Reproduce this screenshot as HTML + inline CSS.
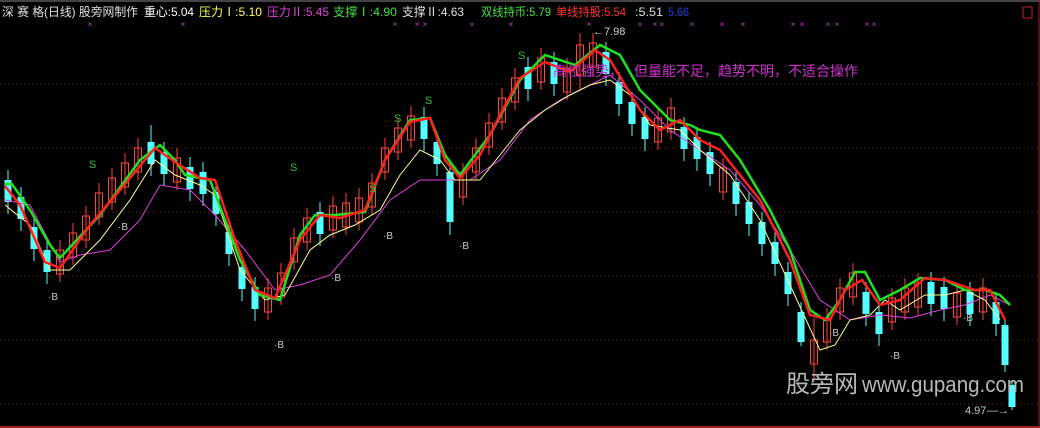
<!DOCTYPE html>
<html><head><meta charset="utf-8"><style>
html,body{margin:0;padding:0;background:#000;width:1040px;height:428px;overflow:hidden}
svg{display:block}
text{font-family:"Liberation Sans","Noto Sans CJK SC",sans-serif}
</style></head><body>
<svg width="1040" height="428" viewBox="0 0 1040 428" xmlns="http://www.w3.org/2000/svg">
<rect width="1040" height="428" fill="#000"/>
<line x1="0" y1="1" x2="1040" y2="1" stroke="#888" stroke-width="1"/>
<line x1="0" y1="427" x2="1040" y2="427" stroke="#a02020" stroke-width="2"/>
<line x1="1039" y1="0" x2="1039" y2="428" stroke="#a02020" stroke-width="1"/>
<g stroke="#8a1e1e" stroke-width="1" stroke-dasharray="1,3">
<line x1="0" y1="84" x2="1040" y2="84"/><line x1="0" y1="148" x2="1040" y2="148"/>
<line x1="0" y1="212" x2="1040" y2="212"/><line x1="0" y1="276" x2="1040" y2="276"/>
<line x1="0" y1="340" x2="1040" y2="340"/><line x1="0" y1="404" x2="1040" y2="404"/>
</g>
<rect x="1023" y="7" width="9" height="11" fill="none" stroke="#c02020"/>
<g font-size="12" lengthAdjust="spacingAndGlyphs">
<text x="2" y="16" fill="#e0e0e0" textLength="136" lengthAdjust="spacingAndGlyphs">深 赛 格(日线) 股旁网制作</text>
<text x="144" y="16" fill="#ffffff" textLength="50" lengthAdjust="spacingAndGlyphs">重心:5.04</text>
<text x="199" y="16" fill="#ffff60" textLength="63" lengthAdjust="spacingAndGlyphs">压力Ⅰ:5.10</text>
<text x="267" y="16" fill="#e040e0" textLength="62" lengthAdjust="spacingAndGlyphs">压力Ⅱ:5.45</text>
<text x="333" y="16" fill="#40e040" textLength="64" lengthAdjust="spacingAndGlyphs">支撑Ⅰ:4.90</text>
<text x="402" y="16" fill="#e0e0e0" textLength="62" lengthAdjust="spacingAndGlyphs">支撑Ⅱ:4.63</text>
<text x="481" y="16" fill="#40e040" textLength="70" lengthAdjust="spacingAndGlyphs">双线持币:5.79</text>
<text x="556" y="16" fill="#ff3030" textLength="70" lengthAdjust="spacingAndGlyphs">单线持股:5.54</text>
<text x="635" y="16" fill="#e0e0e0" textLength="28" lengthAdjust="spacingAndGlyphs">:5.51</text>
<text x="668" y="16" fill="#2040e0" textLength="21" lengthAdjust="spacingAndGlyphs">5.66</text>
</g>
<g font-size="8" fill="#d040d0" text-anchor="middle">
<text x="90" y="27">×</text><text x="183" y="27">×</text><text x="395" y="27">×</text><text x="417" y="27">×</text><text x="425" y="27">×</text>
<text x="472" y="27">×</text><text x="511" y="27">×</text><text x="589" y="27">×</text><text x="640" y="27">×</text><text x="655" y="27">×</text><text x="662" y="27">×</text>
<text x="692" y="27">×</text><text x="722" y="27">×</text><text x="743" y="27">×</text><text x="793" y="27">×</text><text x="802" y="27">×</text>
<text x="828" y="27">×</text><text x="837" y="27">×</text><text x="867" y="27">×</text><text x="874" y="27">×</text>
</g>
<!-- wicks -->
<path stroke="#ff4040" stroke-width="1" fill="none" d="M60 240V282M73 223V265M86 206V248M99 183V225M112 168V210M125 153V195M138 138V180M177 148V190M268 278V320M281 263V305M294 228V270M307 208V250M333 196V238M346 193V235M359 188V230M372 173V215M385 138V180M398 118V160M411 106V148M463 163V205M476 138V180M489 113V155M502 88V130M515 68V110M541 48V90M567 58V100M580 33V90M593 33V75M658 108V150M671 98V140M723 158V200M814 318V380M827 308V350M840 278V320M853 263V305M892 288V330M905 278V320M918 273V315M957 283V325M983 278V320"/>
<path stroke="#54ffff" stroke-width="1" fill="none" d="M8 170V214M21 187V231M34 217V261M47 240V284M151 125V176M164 142V186M190 157V201M203 162V206M216 182V226M229 222V266M242 257V301M255 277V321M320 202V246M424 107V151M437 132V176M450 162V235M528 57V101M554 52V96M606 42V86M619 72V116M632 92V136M645 107V151M684 117V161M697 127V171M710 142V186M736 172V216M749 192V236M762 212V256M775 232V276M788 262V306M801 302V346M866 282V326M879 302V346M931 272V316M944 277V321M970 282V326M996 292V336M1005 320V372M1012 380V410"/>
<g fill="#54ffff">
<rect x="4.5" y="180" width="7" height="22"/><rect x="17.5" y="197" width="7" height="22"/><rect x="30.5" y="227" width="7" height="22"/><rect x="43.5" y="250" width="7" height="22"/>
<rect x="147.5" y="142" width="7" height="22"/><rect x="160.5" y="152" width="7" height="22"/><rect x="186.5" y="167" width="7" height="22"/><rect x="199.5" y="172" width="7" height="22"/>
<rect x="212.5" y="192" width="7" height="22"/><rect x="225.5" y="232" width="7" height="22"/><rect x="238.5" y="267" width="7" height="22"/><rect x="251.5" y="287" width="7" height="22"/>
<rect x="316.5" y="212" width="7" height="22"/><rect x="420.5" y="117" width="7" height="22"/><rect x="433.5" y="142" width="7" height="22"/><rect x="446.5" y="172" width="7" height="50"/>
<rect x="524.5" y="67" width="7" height="22"/><rect x="550.5" y="62" width="7" height="22"/><rect x="602.5" y="52" width="7" height="22"/><rect x="615.5" y="82" width="7" height="22"/>
<rect x="628.5" y="102" width="7" height="22"/><rect x="641.5" y="117" width="7" height="22"/><rect x="680.5" y="127" width="7" height="22"/><rect x="693.5" y="137" width="7" height="22"/>
<rect x="706.5" y="152" width="7" height="22"/><rect x="732.5" y="182" width="7" height="22"/><rect x="745.5" y="202" width="7" height="22"/><rect x="758.5" y="222" width="7" height="22"/>
<rect x="771.5" y="242" width="7" height="22"/><rect x="784.5" y="272" width="7" height="22"/><rect x="797.5" y="312" width="7" height="30"/><rect x="862.5" y="292" width="7" height="22"/>
<rect x="875.5" y="312" width="7" height="22"/><rect x="927.5" y="282" width="7" height="22"/><rect x="940.5" y="287" width="7" height="22"/><rect x="966.5" y="292" width="7" height="22"/>
<rect x="992.5" y="302" width="7" height="22"/><rect x="1001.5" y="325" width="7" height="40"/><rect x="1008.5" y="385" width="7" height="22"/>
</g>
<g fill="none" stroke="#ff4a3a" stroke-width="1">
<rect x="56.5" y="250" width="7" height="24"/><rect x="69.5" y="233" width="7" height="24"/><rect x="82.5" y="216" width="7" height="24"/><rect x="95.5" y="193" width="7" height="24"/>
<rect x="108.5" y="178" width="7" height="24"/><rect x="121.5" y="163" width="7" height="24"/><rect x="134.5" y="148" width="7" height="24"/><rect x="173.5" y="158" width="7" height="24"/>
<rect x="264.5" y="288" width="7" height="24"/><rect x="277.5" y="273" width="7" height="24"/><rect x="290.5" y="238" width="7" height="24"/><rect x="303.5" y="218" width="7" height="24"/>
<rect x="329.5" y="206" width="7" height="24"/><rect x="342.5" y="203" width="7" height="24"/><rect x="355.5" y="198" width="7" height="24"/><rect x="368.5" y="183" width="7" height="24"/>
<rect x="381.5" y="148" width="7" height="24"/><rect x="394.5" y="128" width="7" height="24"/><rect x="407.5" y="116" width="7" height="24"/><rect x="459.5" y="173" width="7" height="24"/>
<rect x="472.5" y="148" width="7" height="24"/><rect x="485.5" y="123" width="7" height="24"/><rect x="498.5" y="98" width="7" height="24"/><rect x="511.5" y="78" width="7" height="24"/>
<rect x="537.5" y="58" width="7" height="24"/><rect x="563.5" y="68" width="7" height="24"/><rect x="576.5" y="45" width="7" height="30"/><rect x="589.5" y="43" width="7" height="24"/>
<rect x="654.5" y="118" width="7" height="24"/><rect x="667.5" y="108" width="7" height="24"/><rect x="719.5" y="168" width="7" height="24"/><rect x="810.5" y="340" width="7" height="24"/>
<rect x="823.5" y="318" width="7" height="24"/><rect x="836.5" y="288" width="7" height="24"/><rect x="849.5" y="273" width="7" height="24"/><rect x="888.5" y="298" width="7" height="24"/>
<rect x="901.5" y="288" width="7" height="24"/><rect x="914.5" y="283" width="7" height="24"/><rect x="953.5" y="293" width="7" height="24"/><rect x="979.5" y="288" width="7" height="24"/>
</g>
<polyline fill="none" stroke="#e040e0" stroke-width="1" points="5,200 30,205 60,262 80,255 110,250 140,220 160,185 190,190 215,215 245,250 275,290 300,285 330,275 360,240 390,200 420,180 450,180 470,180 500,160 530,120 560,100 590,85 610,75 640,100 670,130 700,150 730,170 760,205 790,250 820,300 850,320 880,315 910,318 940,310 965,305 990,295 1010,305"/>
<polyline fill="none" stroke="#ffff90" stroke-width="1" points="5,205 30,225 50,270 70,270 100,240 130,200 155,160 175,175 200,185 215,195 240,270 265,300 285,295 310,250 330,235 355,225 380,210 400,175 420,150 440,160 455,180 480,180 500,155 520,130 545,110 570,95 590,85 610,80 630,95 650,125 680,130 700,150 730,175 760,220 790,285 820,350 835,345 850,320 870,315 885,300 900,310 925,295 945,295 965,290 985,300 1000,320"/>
<polyline fill="none" stroke="#20e020" stroke-width="2.5" points="5,184 12,184 30,210 50,245 60,258 100,215 140,160 160,145 175,160 185,175 210,180 240,260 260,295 280,300 300,235 315,215 335,215 365,212 385,160 410,120 430,118 445,155 460,175 490,135 520,80 545,55 575,65 600,45 620,55 640,90 670,120 690,125 700,130 720,135 740,160 770,210 790,250 810,310 825,320 840,300 855,272 865,272 880,300 900,290 920,278 945,280 965,290 985,290 1000,295 1010,305"/>
<polyline fill="none" stroke="#ff2020" stroke-width="2.5" points="5,186 20,205 45,262 60,268 90,225 120,190 155,148 175,162 200,178 215,180 235,240 255,290 275,298 300,240 320,215 340,218 365,210 385,160 410,122 430,118 445,160 460,178 480,155 500,115 520,78 545,62 570,72 595,50 610,60 640,110 660,130 680,120 700,140 720,150 740,175 760,200 790,260 810,315 830,320 845,290 862,280 880,305 900,300 925,278 945,280 975,290 990,290 1005,320"/>
<g font-size="11" fill="#30c030">
<text x="89" y="168">S</text><text x="290" y="171">S</text><text x="369" y="192">S</text><text x="394" y="122">S</text><text x="425" y="104">S</text><text x="518" y="59">S</text>
</g>
<g font-size="10" fill="#c8c8c8">
<text x="48" y="300">·B</text><text x="118" y="230">·B</text><text x="274" y="348">·B</text><text x="331" y="281">·B</text><text x="383" y="239">·B</text><text x="459" y="249">·B</text><text x="829" y="336">·B</text><text x="890" y="359">·B</text><text x="963" y="321">·B</text>
</g>
<text x="593" y="35" font-size="11" fill="#d0d0d0">←7.98</text>
<text x="553" y="76" font-size="14" fill="#d030d0">高位强势，</text>
<text x="634" y="76" font-size="14" fill="#d030d0">但量能不足，趋势不明，不适合操作</text>
<text x="786" y="392" font-size="24" fill="#b8b8b8">股旁网</text>
<text x="862" y="392" font-size="22" fill="#b8b8b8" font-family="Liberation Mono,monospace" textLength="162" lengthAdjust="spacingAndGlyphs">www.gupang.com</text>
<text x="965" y="414" font-size="11" fill="#c8c8c8">4.97</text>
<text x="987" y="414" font-size="11" fill="#c8c8c8">—→</text>
</svg>
</body></html>
